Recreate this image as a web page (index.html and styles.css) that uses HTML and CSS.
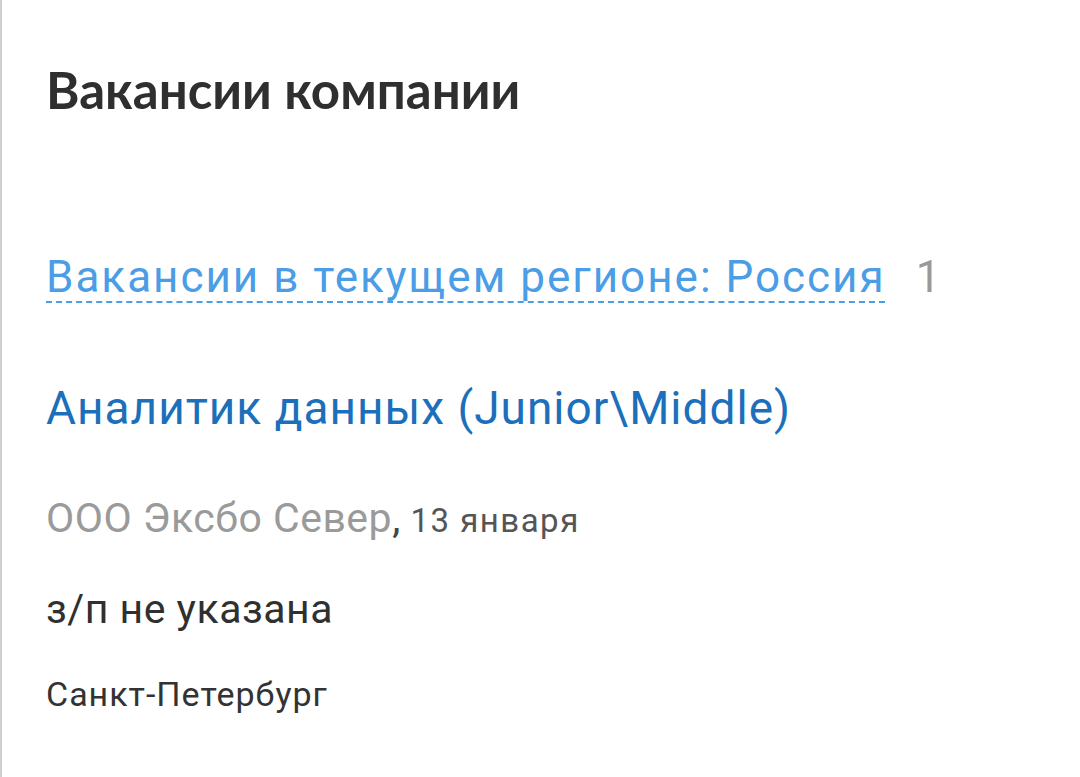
FILE: index.html
```html
<!DOCTYPE html>
<html lang="ru">
  <head>
    <meta charset="UTF-8">
    <meta name="viewport" content="width=device-width, initial-scale=1.0">
    <title>Вакансии компании</title>
    <link rel="stylesheet" href="styles.css">
  </head>
  <body>
    <div class="page">
      <!-- Заголовок -->
      <h2 class="section-title">Вакансии компании</h2>

      <!-- Регион -->
      <div class="region">
        <a class="region-link" href="#">Вакансии в текущем регионе: Россия</a>
        <span class="region-count">1</span>
      </div>

      <!-- Вакансия -->
      <div class="vacancy">
        <a class="vacancy-title" href="#">Аналитик данных (Junior\Middle)</a>
        <div class="vacancy-meta">
          <span class="vacancy-company">ООО Эксбо Север</span>, <span class="vacancy-date">13 января</span>
        </div>
        <div class="vacancy-salary">з/п не указана</div>
        <div class="vacancy-city">Санкт-Петербург</div>
      </div>
    </div>
  </body>
</html>
```

FILE: styles.css
```css
body {
  margin: 0;
  background: #fff;
  font-family: Roboto, "Liberation Sans", sans-serif;
  color: #333;
}

.page {
  min-height: 777px;
  border-left: 2px solid #cfcfcf;
  padding: 56px 0 0 44px;
  box-sizing: border-box;
}

.section-title {
  font-family: Lato, "Open Sans", "Liberation Sans", sans-serif;
  font-weight: 700;
  font-size: 51px;
  line-height: 68px;
  color: #2f2f2f;
  margin: 0 0 127px;
}

.region {
  display: flex;
  align-items: baseline;
  gap: 30px;
  font-size: 44px;
  line-height: 52px;
}

.region-link {
  color: #4b9de6;
  letter-spacing: 2px;
  text-decoration: underline dashed #4b9de6;
  text-decoration-thickness: 2px;
  text-underline-offset: 9px;
}

.region-count {
  color: #999;
}

.vacancy {
  margin-top: 77px;
}

.vacancy-title {
  display: block;
  color: #1c6fba;
  text-decoration: none;
  font-size: 46px;
  line-height: 56px;
  letter-spacing: 1px;
}

.vacancy-meta {
  margin-top: 58px;
  font-size: 41px;
  line-height: 48px;
  color: #444;
}

.vacancy-company {
  color: #9a9a9a;
  letter-spacing: 0.5px;
}

.vacancy-date {
  font-size: 33px;
  letter-spacing: 1.5px;
  color: #555;
}

.vacancy-salary {
  margin-top: 40px;
  font-size: 41px;
  line-height: 48px;
  letter-spacing: 0.5px;
  color: #303030;
}

.vacancy-city {
  margin-top: 41px;
  font-size: 34px;
  line-height: 40px;
  letter-spacing: 1px;
  color: #333;
}
```
